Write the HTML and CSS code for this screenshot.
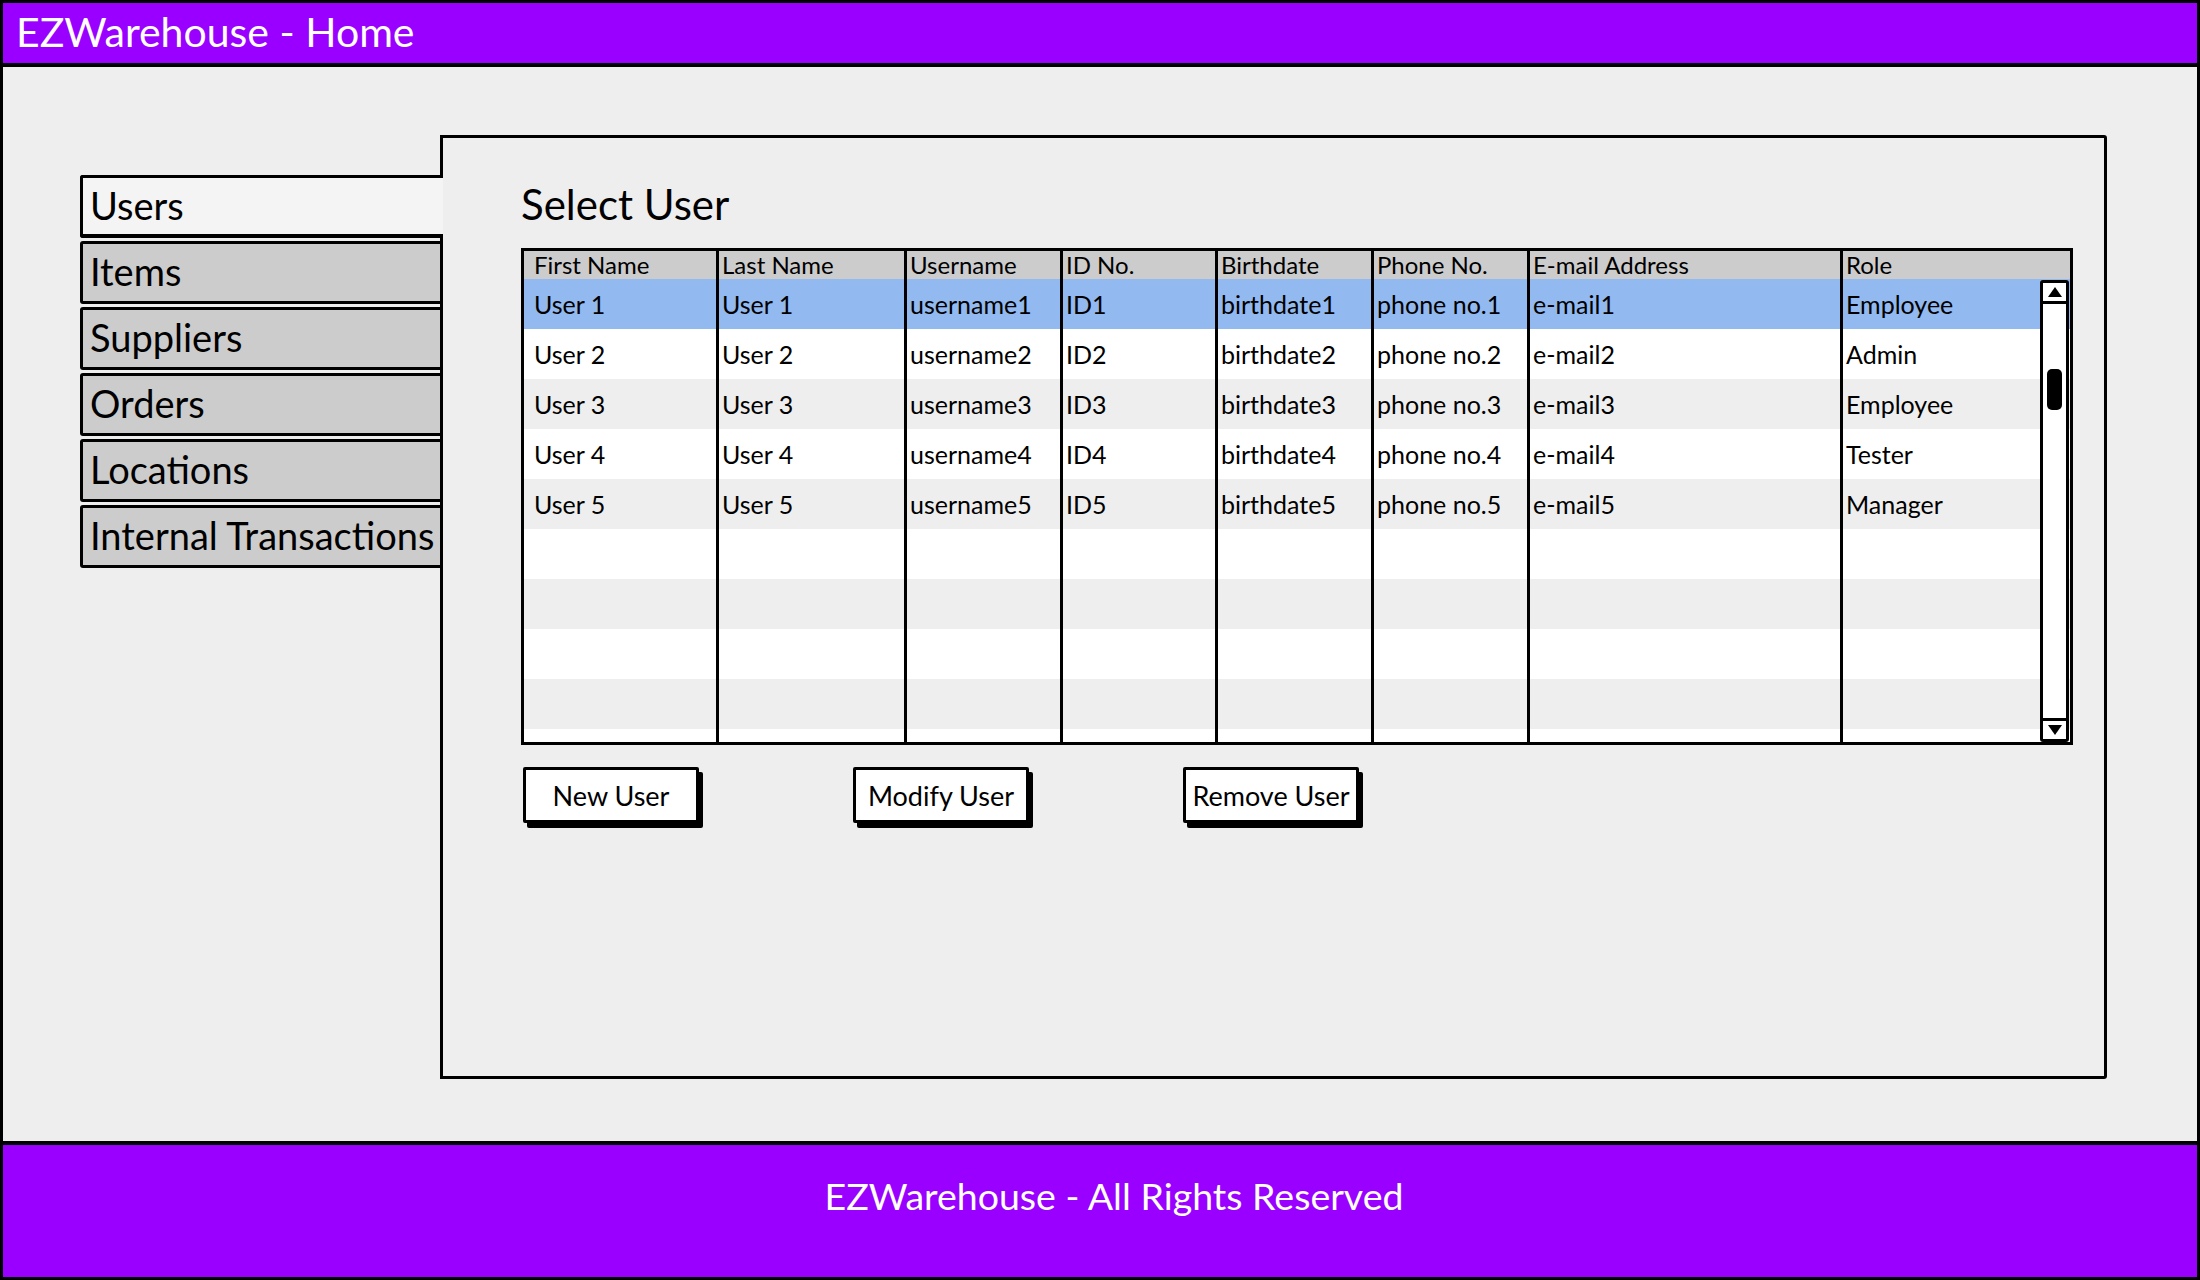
FILE: index.html
```html
<!DOCTYPE html>
<html lang="en">
<head>
<meta charset="utf-8">
<title>EZWarehouse - Home</title>
<link rel="stylesheet" href="styles.css">
</head>
<body>
<div class="window">
  <header class="topbar">EZWarehouse - Home</header>
  <main class="main">
    <nav class="tabs">
      <div class="tab active">Users</div>
      <div class="tab">Items</div>
      <div class="tab">Suppliers</div>
      <div class="tab">Orders</div>
      <div class="tab">Locations</div>
      <div class="tab">Internal Transactions</div>
    </nav>
    <section class="panel">
      <h1 class="title">Select User</h1>
      <div class="table">
        <div class="row head">
          <div class="cell">First Name</div><div class="cell">Last Name</div><div class="cell">Username</div><div class="cell">ID No.</div><div class="cell">Birthdate</div><div class="cell">Phone No.</div><div class="cell">E-mail Address</div><div class="cell">Role</div>
        </div>
        <div class="row sel">
          <div class="cell">User 1</div><div class="cell">User 1</div><div class="cell">username1</div><div class="cell">ID1</div><div class="cell">birthdate1</div><div class="cell">phone no.1</div><div class="cell">e-mail1</div><div class="cell">Employee</div>
        </div>
        <div class="row">
          <div class="cell">User 2</div><div class="cell">User 2</div><div class="cell">username2</div><div class="cell">ID2</div><div class="cell">birthdate2</div><div class="cell">phone no.2</div><div class="cell">e-mail2</div><div class="cell">Admin</div>
        </div>
        <div class="row alt">
          <div class="cell">User 3</div><div class="cell">User 3</div><div class="cell">username3</div><div class="cell">ID3</div><div class="cell">birthdate3</div><div class="cell">phone no.3</div><div class="cell">e-mail3</div><div class="cell">Employee</div>
        </div>
        <div class="row">
          <div class="cell">User 4</div><div class="cell">User 4</div><div class="cell">username4</div><div class="cell">ID4</div><div class="cell">birthdate4</div><div class="cell">phone no.4</div><div class="cell">e-mail4</div><div class="cell">Tester</div>
        </div>
        <div class="row alt">
          <div class="cell">User 5</div><div class="cell">User 5</div><div class="cell">username5</div><div class="cell">ID5</div><div class="cell">birthdate5</div><div class="cell">phone no.5</div><div class="cell">e-mail5</div><div class="cell">Manager</div>
        </div>
        <div class="row">
          <div class="cell"></div><div class="cell"></div><div class="cell"></div><div class="cell"></div><div class="cell"></div><div class="cell"></div><div class="cell"></div><div class="cell"></div>
        </div>
        <div class="row alt">
          <div class="cell"></div><div class="cell"></div><div class="cell"></div><div class="cell"></div><div class="cell"></div><div class="cell"></div><div class="cell"></div><div class="cell"></div>
        </div>
        <div class="row">
          <div class="cell"></div><div class="cell"></div><div class="cell"></div><div class="cell"></div><div class="cell"></div><div class="cell"></div><div class="cell"></div><div class="cell"></div>
        </div>
        <div class="row alt">
          <div class="cell"></div><div class="cell"></div><div class="cell"></div><div class="cell"></div><div class="cell"></div><div class="cell"></div><div class="cell"></div><div class="cell"></div>
        </div>
        <div class="row filler">
          <div class="cell"></div><div class="cell"></div><div class="cell"></div><div class="cell"></div><div class="cell"></div><div class="cell"></div><div class="cell"></div><div class="cell"></div>
        </div>
        <div class="scrollbar">
          <div class="sb-btn up"><span class="tri-up"></span></div>
          <div class="sb-track"><div class="sb-thumb"></div></div>
          <div class="sb-btn down"><span class="tri-down"></span></div>
        </div>
      </div>
      <div class="actions">
        <button class="btn">New User</button>
        <button class="btn">Modify User</button>
        <button class="btn">Remove User</button>
      </div>
    </section>
  </main>
  <footer class="bottombar">EZWarehouse - All Rights Reserved</footer>
</div>
</body>
</html>
```

FILE: styles.css
```css
* { box-sizing: border-box; }

html, body {
  margin: 0;
  padding: 0;
  background: #eeeeee;
}

body {
  font-family: Lato, "Open Sans", "DejaVu Sans", sans-serif;
  color: #000;
}

.window {
  width: 2200px;
  height: 1280px;
  border: 3px solid #000;
  background: #eeeeee;
  display: flex;
  flex-direction: column;
}

.topbar {
  height: 64px;
  background: #9900ff;
  border-bottom: 4px solid #000;
  color: #fff;
  font-size: 41px;
  line-height: 58px;
  padding-left: 13px;
}

.main {
  flex: 1;
  display: flex;
  align-items: flex-start;
  padding: 68px 0 0 77px;
}

.tabs {
  width: 363px;
  margin-top: 40px;
  margin-right: -3px;
  display: flex;
  flex-direction: column;
  gap: 3px;
  position: relative;
  z-index: 1;
}

.tab {
  height: 63px;
  border: 3px solid #000;
  border-radius: 3px 0 0 3px;
  background: #cccccc;
  font-size: 38px;
  line-height: 54px;
  padding-left: 7px;
  white-space: nowrap;
}

.tab.active {
  background: #f4f4f4;
  border-right: none;
  border-bottom-width: 4px;
}

.panel {
  width: 1667px;
  height: 944px;
  border: 3px solid #000;
  border-radius: 0 3px 3px 0;
  background: #eeeeee;
  padding: 40px 0 0 78px;
}

.title {
  margin: 0 0 18px 0;
  font-size: 42px;
  font-weight: normal;
  line-height: 52px;
}

.table {
  position: relative;
  width: 1552px;
  border: 3px solid #000;
  background: #fff;
}

.row {
  display: grid;
  grid-template-columns: 192px 188px 156px 155px 156px 156px 313px 1fr;
  height: 50px;
  background: #fff;
}

.row.head {
  height: 28px;
  background: #cccccc;
}

.row.sel { background: #92b9f0; }
.row.alt { background: #eeeeee; }
.row.filler { height: 13px; }

.cell {
  font-size: 25px;
  line-height: 50px;
  padding-left: 3px;
  white-space: nowrap;
  overflow: hidden;
}

.cell:first-child {
  padding-left: 10px;
}

.cell + .cell {
  border-left: 3px solid #000;
}

.row.head .cell {
  line-height: 28px;
  font-size: 24px;
}

.scrollbar {
  position: absolute;
  top: 29px;
  right: 1px;
  bottom: 0;
  width: 29px;
  border: 3px solid #000;
  border-radius: 3px;
  background: #fff;
  display: flex;
  flex-direction: column;
}

.sb-btn {
  height: 21px;
  display: flex;
  align-items: center;
  justify-content: center;
}

.sb-btn.up { border-bottom: 3px solid #000; }
.sb-btn.down { border-top: 3px solid #000; }

.tri-up {
  width: 0;
  height: 0;
  border-left: 7px solid transparent;
  border-right: 7px solid transparent;
  border-bottom: 10px solid #000;
}

.tri-down {
  width: 0;
  height: 0;
  border-left: 7px solid transparent;
  border-right: 7px solid transparent;
  border-top: 10px solid #000;
}

.sb-track {
  flex: 1;
  padding-left: 4px;
}

.sb-thumb {
  margin-top: 65px;
  width: 15px;
  height: 41px;
  background: #000;
  border-radius: 5px;
}

.actions {
  display: flex;
  gap: 154px;
  margin-top: 22px;
  padding-left: 2px;
}

.btn {
  width: 176px;
  height: 56px;
  border: 3px solid #000;
  border-radius: 2px;
  background: #fff;
  box-shadow: 4px 5px 0 #000;
  font-family: Lato, "Open Sans", sans-serif;
  font-size: 27px;
  color: #000;
  padding: 0;
  margin: 0;
}

.bottombar {
  height: 136px;
  background: #9900ff;
  border-top: 4px solid #000;
  color: #fff;
  font-size: 37.5px;
  display: flex;
  align-items: center;
  justify-content: center;
  padding: 0 0 32px 28px;
}
```
